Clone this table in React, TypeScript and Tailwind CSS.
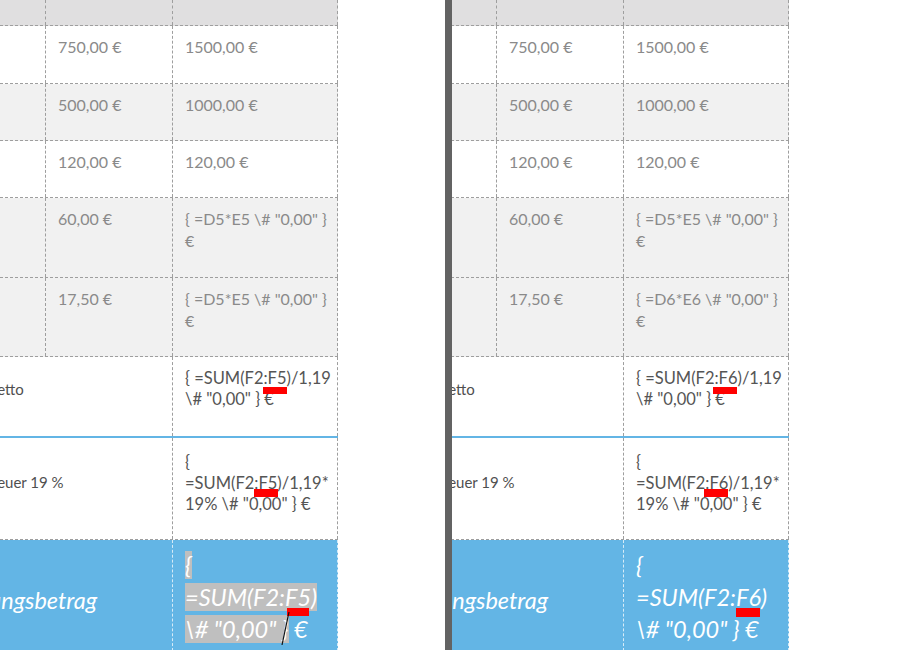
import React from "react";

type Side = "L" | "R";

const upper = "font-['Lato','Liberation_Sans',sans-serif] text-[16px] leading-[22px] text-[#8a8a8a] whitespace-nowrap";
const lower = "font-['Lato','Liberation_Sans',sans-serif] text-[16.5px] leading-[21px] text-[#555555] whitespace-nowrap";
const label = "font-['Lato','Liberation_Sans',sans-serif] text-[15px] leading-[21px] text-[#4f4f4f] whitespace-nowrap";
const big = "font-['Lato','Liberation_Sans',sans-serif] italic text-[23.5px] leading-[32px] text-white whitespace-nowrap";

const colA = "h-full w-[146px] shrink-0 border-r border-dashed border-[#9e9e9e]";
const colB = "h-full w-[127px] shrink-0 border-r border-dashed border-[#9e9e9e] pl-[12px] pt-[10px]";
const colC = "h-full w-[165px] shrink-0 border-r border-dashed border-[#9e9e9e] pl-[12px] pt-[10px]";
const merged = "h-full w-[273px] shrink-0 border-r border-dashed border-[#9e9e9e]";

function Mark({ x, y, w, h }: { x: number; y: number; w: number; h: number }) {
  return <div className="absolute bg-[#ff0000]" style={{ left: x, top: y, width: w, height: h }} />;
}

function Sheet({ side }: { side: Side }) {
  const L = side === "L";
  const n = L ? "5" : "6";
  const top = [
    { h: "h-[58px]", bg: "bg-white", b: "750,00 €", c: ["1500,00 €"] },
    { h: "h-[57px]", bg: "bg-[#f1f1f1]", b: "500,00 €", c: ["1000,00 €"] },
    { h: "h-[57px]", bg: "bg-white", b: "120,00 €", c: ["120,00 €"] },
    { h: "h-[80px]", bg: "bg-[#f1f1f1]", b: "60,00 €", c: ['{ =D5*E5 \\# "0,00" }', "€"] },
    { h: "h-[79px]", bg: "bg-[#f1f1f1]", b: "17,50 €", c: [`{ =D${n}*E${n} \\# "0,00" }`, "€"] },
  ];

  return (
    <div className={`relative h-[650px] shrink-0 overflow-hidden ${L ? "w-[338px]" : "w-[337px]"}`}>
      <div className={`w-[438px] ${L ? "ml-[-100px]" : "ml-[-101px]"}`}>
        {/* header */}
        <div className="flex h-[26px] border-b border-dashed border-[#9e9e9e] bg-[#e0dfe0]">
          <div className={colA} />
          <div className={colB} />
          <div className={colC} />
        </div>

        {top.map((r, i) => (
          <div key={i} className={`flex border-b border-dashed border-[#9e9e9e] ${r.h} ${r.bg}`}>
            <div className={colA} />
            <div className={`${colB} ${upper}`}>{r.b}</div>
            <div className={`${colC} ${upper}`}>
              {r.c.map((t, j) => (
                <div key={j}>{t}</div>
              ))}
            </div>
          </div>
        ))}

        {/* netto */}
        <div className="flex h-[81px] border-b-2 border-[#63b5e5] bg-white">
          <div className={`${merged} ${label} pl-[86px] pt-[22px]`}>Netto</div>
          <div className={`${colC} ${lower} pt-[11px]`}>
            <div>{`{ =SUM(F2:F${n})/1,19`}</div>
            <div>{'\\# "0,00" } €'}</div>
          </div>
        </div>

        {/* steuer */}
        <div className="flex h-[102px] border-b border-dashed border-[#9e9e9e] bg-white">
          <div className={`${merged} ${label} pl-[84px] pt-[34px]`}>Steuer 19 %</div>
          <div className={`${colC} ${lower} pt-[14px]`}>
            <div>{"{"}</div>
            <div>{`=SUM(F2:F${n})/1,19*`}</div>
            <div>{'19% \\# "0,00" } €'}</div>
          </div>
        </div>

        {/* total */}
        <div className="flex h-[111px] bg-[#63b5e5]">
          <div className={`h-full w-[273px] shrink-0 border-r border-dashed border-[#d6ebf7] ${big} pl-[29px] pt-[44px]`}>
            Rechnungsbetrag
          </div>
          <div className={`h-full w-[165px] shrink-0 border-r border-dashed border-[#d6ebf7] pl-[12px] pt-[9px] ${big}`}>
            {L ? (
              <>
                <div><span className="bg-[#bfbfbf]">{"{"}</span></div>
                <div><span className="bg-[#bfbfbf]">{`=SUM(F2:F${n})`}</span></div>
                <div><span className="bg-[#bfbfbf]">{'\\# "0,00" }'}</span> €</div>
              </>
            ) : (
              <>
                <div>{"{"}</div>
                <div>{`=SUM(F2:F${n})`}</div>
                <div>{'\\# "0,00" } €'}</div>
              </>
            )}
          </div>
        </div>
      </div>

      {L ? (
        <>
          <Mark x={263} y={387} w={24} h={7} />
          <Mark x={254} y={489} w={24} h={8} />
          <Mark x={287} y={608} w={22} h={8} />
          <svg className="absolute left-[278px] top-[608px]" width="16" height="40" viewBox="0 0 16 40">
            <path d="M11 4 L4 37" stroke="#111" strokeWidth="1.2" fill="none" />
          </svg>
        </>
      ) : (
        <>
          <Mark x={261} y={387} w={24} h={7} />
          <Mark x={252} y={489} w={24} h={8} />
          <Mark x={284} y={608} w={24} h={9} />
        </>
      )}
    </div>
  );
}

export default function App() {
  return (
    <div className="flex h-[650px] w-[900px] overflow-hidden bg-white">
      <Sheet side="L" />
      <div className="w-[107px] shrink-0" />
      <div className="h-full w-[7px] shrink-0 bg-[#636363]" />
      <Sheet side="R" />
    </div>
  );
}
